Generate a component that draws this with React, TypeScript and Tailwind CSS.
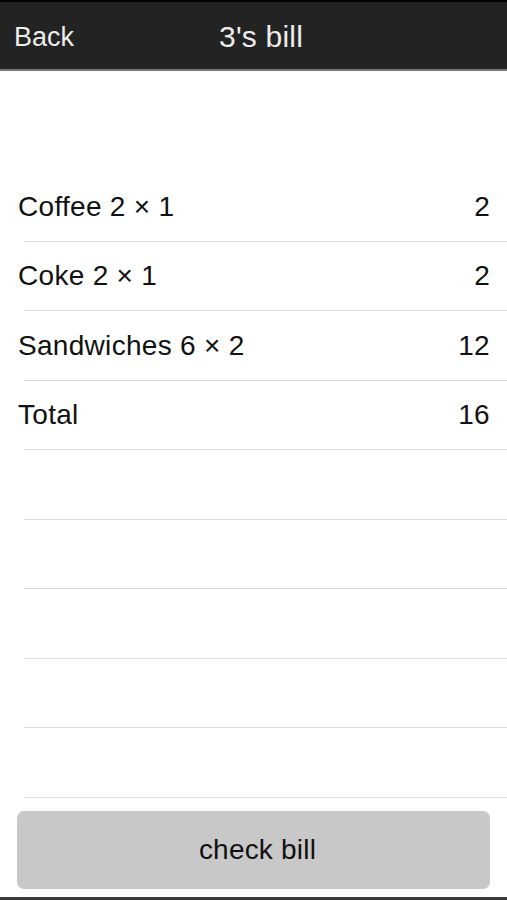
import React from 'react';

const items = [
    { label: 'Coffee 2 × 1', amount: '2' },
    { label: 'Coke 2 × 1', amount: '2' },
    { label: 'Sandwiches 6 × 2', amount: '12' },
    { label: 'Total', amount: '16' },
    { label: '', amount: '' },
    { label: '', amount: '' },
    { label: '', amount: '' },
    { label: '', amount: '' },
    { label: '', amount: '' },
];

export default function App() {
    return (
        <div
            className="w-[507px] h-[900px] flex flex-col bg-white text-[#111]"
            style={{ fontFamily: '"Liberation Sans", Arial, sans-serif' }}
        >
            {/* Nav bar */}
            <div className="h-[71px] shrink-0 flex items-center pt-[3px] bg-[#232323] border-t-2 border-black border-b-2 border-b-[#7a7a7a] text-[#ececec]">
                <button className="pl-[14px] text-[27px] leading-none">Back</button>
                <h1 className="ml-[145px] text-[30px] leading-none tracking-[0.2px]">3's bill</h1>
            </div>

            {/* Bill rows */}
            <div className="flex-1 pt-[101px]">
                {items.map((item, i) => (
                    <div
                        key={i}
                        className={
                            'ml-[24px] flex items-center justify-between border-b border-[#dcdcdc] pr-[17px] text-[28px] leading-none tracking-[0.3px] ' +
                            (i % 2 === 0 ? 'h-[70px]' : 'h-[69px]')
                        }
                    >
                        <span className="-ml-[6px]">{item.label}</span>
                        <span>{item.amount}</span>
                    </div>
                ))}
            </div>

            {/* Bottom action */}
            <div className="shrink-0 px-[17px] pb-[8px] border-b-[3px] border-[#3a3a3a]">
                <button className="w-full h-[78px] pl-[8px] rounded-[7px] bg-[#c8c8c8] text-[28px] tracking-[0.2px] text-[#111]">
                    check bill
                </button>
            </div>
        </div>
    );
}
